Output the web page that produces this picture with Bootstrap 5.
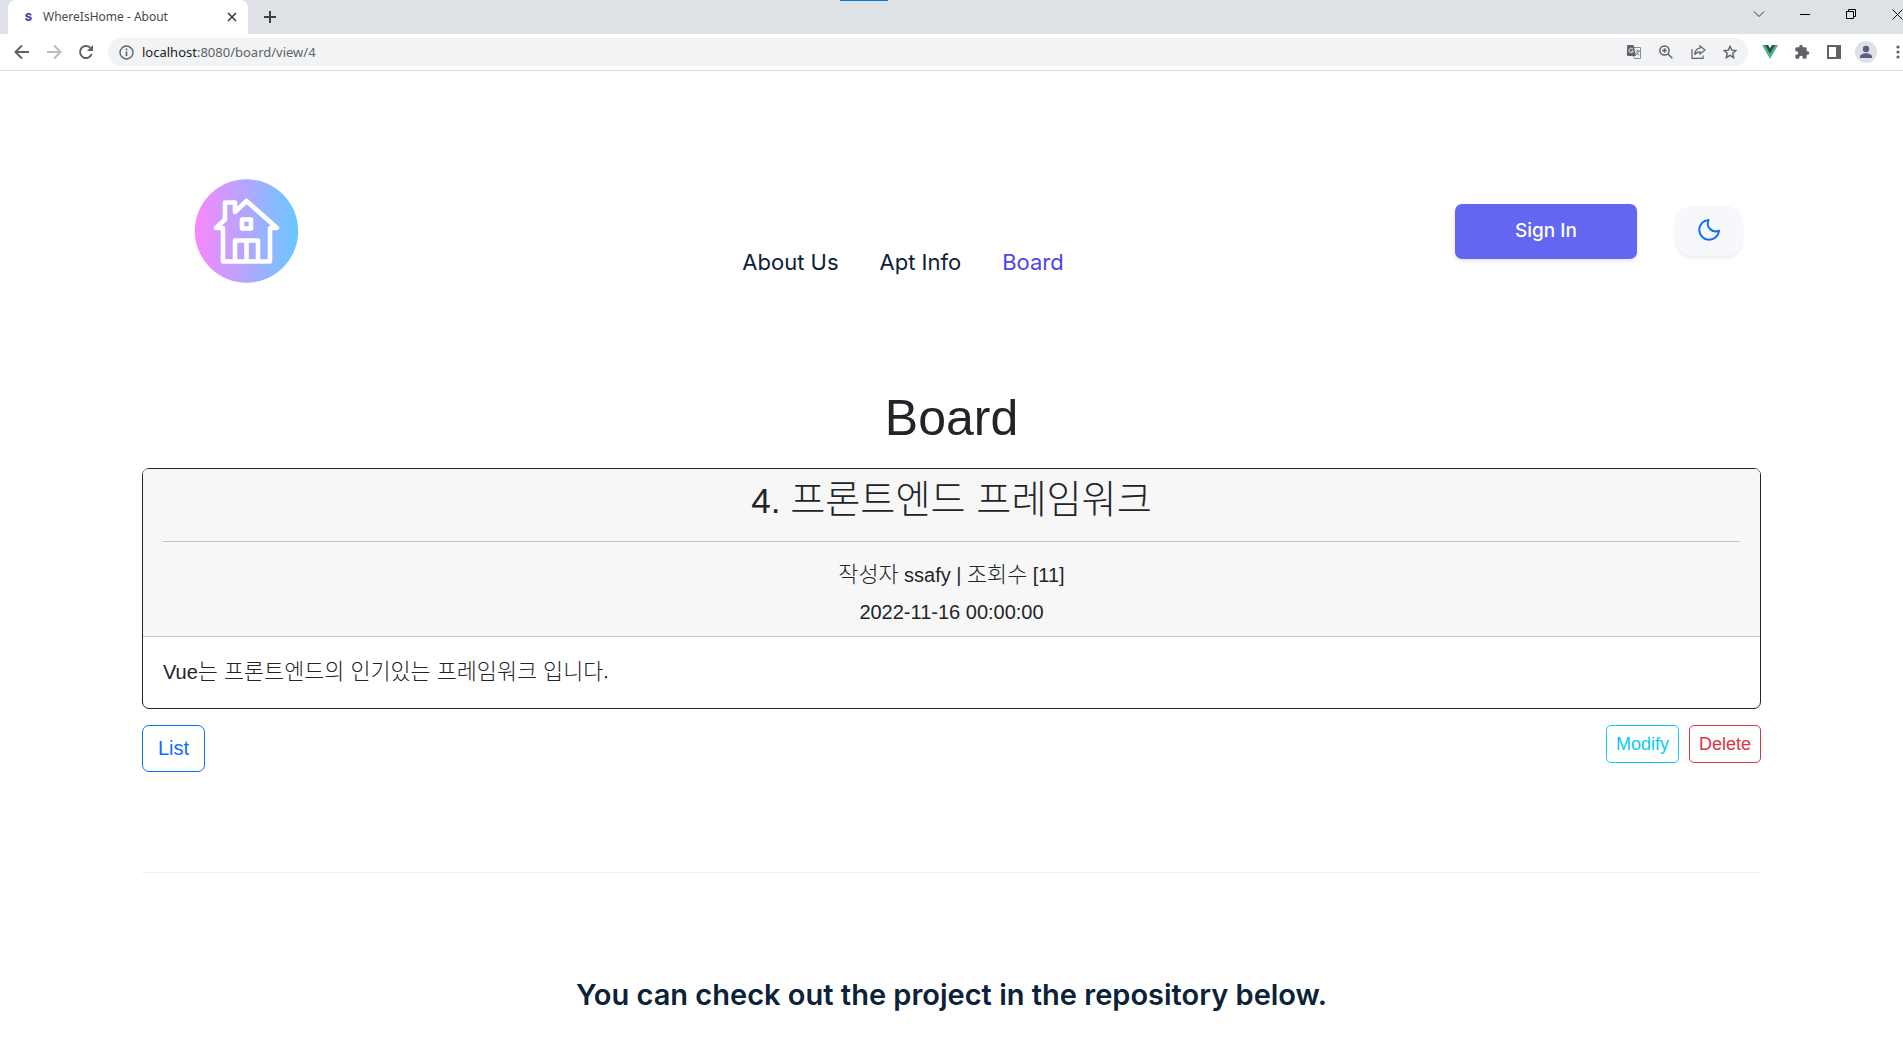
<!DOCTYPE html>
<html lang="ko">
<head>
<meta charset="utf-8">
<meta name="viewport" content="width=device-width, initial-scale=1">
<title>WhereIsHome - About</title>
<link href="https://cdn.jsdelivr.net/npm/bootstrap@5.3.0/dist/css/bootstrap.min.css" rel="stylesheet">
<style>
body{font-family:"Liberation Sans","Noto Sans CJK KR",sans-serif;font-size:20px;line-height:30px;color:#212529;overflow-x:hidden}
.ko{font-family:"Noto Sans CJK KR",sans-serif;font-weight:300;font-size:1.09em;line-height:1}
.chrome-ui{font-family:"Noto Sans","Noto Sans CJK KR",sans-serif;line-height:20px}
.chrome-ui button{border:0;background:none;padding:0;display:flex;align-items:center;justify-content:center;color:#5f6368;flex:none}
.tabstrip{height:34px;background:#dee1e6;position:relative}
.load-track{position:absolute;left:44.15%;top:0;width:240px;height:1px;background:#e5e5e5}
.load-track div{width:48px;height:1px;background:#0078d7}
.tab-item{width:240px;margin-left:8px;background:#fff;border-radius:8px 8px 0 0;padding:0 10px 0 14px;font-size:12px;color:#45494d}
.tab-icon{width:13px;font:800 11px/14px Inter,sans-serif;color:#3f3d9c;text-align:center}
.new-tab{height:34px}
.win-btn{width:46px;height:28px}
.win-btn:last-child{width:29px;justify-content:flex-end!important}
.toolbar{height:37px;border-bottom:1px solid #dadce0;padding-left:6px}
.tool-btn{width:32px;height:28px}
.tool-btn.tool-last{width:21px;justify-content:flex-end;padding-right:3px}
.omni{height:28px;border-radius:14px;background:#f1f3f4;padding-left:11px;padding-right:2px;margin-right:6px;margin-left:6px}
.url{font-size:13px;color:#5f6368}
.url b{font-weight:400;color:#202124}
.page{max-width:1619px;width:90%;margin:0 auto}
.site-nav{padding-top:108px}
.brand{padding:0 52px}
.menu{gap:41px;padding-top:62px;font:400 22px/32px Inter,sans-serif}
.menu a{color:#0b2239;text-decoration:none}
.menu a.active{color:#4f46e5}
.tools{gap:39px;margin-right:19px}
.sign{width:182px;height:55px;border:0;border-radius:7px;background:#6366f1;color:#fff;font:500 19px/28px Inter,sans-serif;box-shadow:0 2px 4px rgba(0,0,0,.1)}
.mode{width:66px;height:50px;border:0;border-radius:16px;background:#f7f8fc;color:#0d6efd;box-shadow:0 2px 4px rgba(0,0,0,.08);padding:0 0 2px;line-height:1}
h1{font-size:50px;line-height:60px;font-weight:400;margin:105px 0 20px}
.post{border:1px solid #212529;border-radius:7px}
.post .card-header{padding:9px 20px 5px;background:#f7f7f7;border-bottom:1px solid #c8c8c9}
.post h2{font-size:35px;line-height:41px;font-weight:400;margin:0}
.post hr{margin:20px 0 15px;opacity:1;border-color:#c3c4c5}
.post p{margin:0;line-height:37px}
.post .card-body{padding:20px;line-height:31px}
.btn-l{font-size:20px;line-height:29px;padding:8px 15px;border-radius:7px}
.btn-s{font-size:18px;line-height:26px;padding:5px 9px;border-radius:5px}
.acts{gap:10px}
.foot{margin-top:100px;border-top:1px solid #f0f0f1;padding-top:104px;color:#0b2239}
.foot h3{font:600 29px/36px Inter,sans-serif;margin:0}
</style>
</head>
<body>
<div class="chrome-ui">
  <div class="tabstrip d-flex align-items-start">
    <div class="load-track"><div></div></div>
    <div class="tab-item d-flex align-items-center align-self-stretch">
      <span class="tab-icon">S</span>
      <span class="ms-2 flex-grow-1">WhereIsHome - About</span>
      <button aria-label="Close tab"><svg width="12" height="12" viewBox="0 0 12 12" stroke="#3c4043" stroke-width="1.7"><path d="M2 2l8 8M10 2l-8 8"/></svg></button>
    </div>
    <button class="new-tab ms-3" aria-label="New tab"><svg width="12" height="12" viewBox="0 0 12 12" stroke="#3c4043" stroke-width="2"><path d="M6 0v12M0 6h12"/></svg></button>
    <div class="d-flex ms-auto">
      <button class="win-btn" aria-label="Search tabs"><svg width="12" height="12" viewBox="0 0 12 12" fill="none" stroke="#333"><path d="M1 3.500l5 5 5-5"/></svg></button>
      <button class="win-btn" aria-label="Minimize"><svg width="10" height="10" stroke="#000"><path d="M0 5.500h10"/></svg></button>
      <button class="win-btn" aria-label="Restore"><svg width="10" height="10" fill="none" stroke="#000"><path d="M.5 2.500h7v7h-7zM2.500 2.500v-2h7v7h-2"/></svg></button>
      <button class="win-btn" aria-label="Close"><svg width="11" height="11" stroke="#111"><path d="M.5.5l10 10M10.500.5l-10 10"/></svg></button>
    </div>
  </div>
  <div class="toolbar d-flex align-items-center">
    <button class="tool-btn" aria-label="Back"><svg width="16" height="16" viewBox="0 0 16 16" fill="none" stroke="#5f6368" stroke-width="2"><path d="M15 8H2.500M8 1.500L1.500 8 8 14.500"/></svg></button>
    <button class="tool-btn" aria-label="Forward"><svg width="16" height="16" viewBox="0 0 16 16" fill="none" stroke="#babcbe" stroke-width="2"><path d="M1 8h12.500M8 1.500L14.500 8 8 14.500"/></svg></button>
    <button class="tool-btn" aria-label="Reload"><svg width="16" height="16" viewBox="0 0 16 16"><path d="M13.700 10a6 6 0 1 1-1.400-6.200" fill="none" stroke="#5f6368" stroke-width="2"/><path d="M15 1v6H9z" fill="#5f6368"/></svg></button>
    <div class="omni d-flex align-items-center flex-grow-1">
      <svg width="15" height="15" viewBox="0 0 15 15" fill="none" stroke="#5f6368"><circle cx="7.500" cy="7.500" r="6.500" stroke-width="1.400"/><path d="M7.500 6.500V11M7.500 3.600v1.600" stroke-width="1.600"/></svg>
      <a class="url ms-2 me-auto text-decoration-none" href="#"><b>localhost</b>:8080/board/view/4</a>
      <button class="tool-btn" aria-label="Translate"><svg width="14" height="14" viewBox="0 0 14 14"><path d="M6 2.500h7.500v11h-6L6 10" fill="#f1f3f4" stroke="#8a8d91"/><path d="M1 0h5.500L9 11H1a1 1 0 0 1-1-1V1a1 1 0 0 1 1-1z" fill="#5f6368"/><path d="M6 4.300A2.200 2.200 0 1 0 6.300 6H4.300" fill="none" stroke="#f1f3f4"/><path d="M8.700 6H13M10.700 5v1M9.500 10l2.500-4M9.500 7.500l2.500 3" fill="none" stroke="#5f6368" stroke-width=".8"/></svg></button>
      <button class="tool-btn" aria-label="Zoom"><svg width="14" height="14" viewBox="0 0 14 14" fill="none" stroke="#5f6368" stroke-width="1.500"><circle cx="5.500" cy="5.500" r="4.600"/><path d="M9 9l4.300 4.300M5.500 3.200v4.600M3.200 5.500h4.600"/></svg></button>
      <button class="tool-btn" aria-label="Share"><svg width="15" height="14" viewBox="0 0 15 14" fill="none" stroke="#5f6368" stroke-width="1.200"><path d="M1 4v9.300h11V10.500M9 1l5 4-5 4V6.800C6.500 6.800 5 7.600 3.700 9.600 4 6 6 3.600 9 3.200z"/></svg></button>
      <button class="tool-btn" aria-label="Bookmark"><svg width="14" height="14" viewBox="0 0 14 14" fill="none" stroke="#5f6368" stroke-width="1.400"><path d="M7 1.300l1.700 3.900 4.200.4-3.200 2.800 1 4.200L7 10.400l-3.700 2.200 1-4.200L1.100 5.600l4.200-.4z"/></svg></button>
    </div>
    <button class="tool-btn" aria-label="Vue devtools"><svg width="16" height="14" viewBox="0 0 16 14"><path d="M0 0h16L8 14z" fill="#41b883"/><path d="M3 0h10L8 8.700z" fill="#35495e"/><path d="M6.100 0h3.800L8 3.300z" fill="#fff"/></svg></button>
    <button class="tool-btn" aria-label="Extensions"><svg width="16" height="16" viewBox="0 0 24 24" fill="#5f6368"><path d="M20.500 11H19V7a2 2 0 0 0-2-2h-4V3.500a2.500 2.500 0 0 0-5 0V5H4a2 2 0 0 0-2 2v3.800h1.500a2.700 2.700 0 0 1 0 5.400H2V20a2 2 0 0 0 2 2h3.800v-1.500a2.700 2.700 0 0 1 5.400 0V22H17a2 2 0 0 0 2-2v-4h1.500a2.500 2.500 0 0 0 0-5z"/></svg></button>
    <button class="tool-btn" aria-label="Side panel"><svg width="14" height="14"><path d="M1 1h12v12H1z" fill="#fff" stroke="#5f6368" stroke-width="2"/><path d="M9 1h4v12H9z" fill="#5f6368"/></svg></button>
    <button class="tool-btn" aria-label="Profile"><svg width="22" height="22"><circle cx="11" cy="11" r="11" fill="#dee1e6"/><circle cx="11" cy="8" r="3.200" fill="#57617a"/><path d="M5 17v-1.500c0-2 3.500-3.300 6-3.300s6 1.300 6 3.300V17z" fill="#57617a"/></svg></button>
    <button class="tool-btn tool-last" aria-label="Menu"><svg width="4" height="14" fill="#5f6368"><circle cx="2" cy="2" r="1.600"/><circle cx="2" cy="7" r="1.600"/><circle cx="2" cy="12" r="1.600"/></svg></button>
  </div>
</div>

<div class="page">
  <nav class="site-nav d-flex align-items-center justify-content-between">
    <a class="brand" href="#" aria-label="WhereIsHome"><svg class="d-block" width="105" height="104" viewBox="0 0 105 104">
      <defs><linearGradient id="g"><stop offset="0" stop-color="#fb86fd"/><stop offset="1" stop-color="#67c8ff"/></linearGradient></defs>
      <circle cx="52.500" cy="52" r="51.700" fill="url(#g)"/>
      <g fill="none" stroke="#fff" stroke-width="4.600" stroke-linejoin="round" stroke-linecap="round">
        <path d="M29 49v33.500h47V49M29 49h-7l9-8.500V23.500h10v9.500L52.500 22 83 49h-7"/>
        <path d="M41 81V61.500h23V81M52.500 62v19"/>
        <rect x="48" y="40.500" width="9" height="9"/>
      </g></svg></a>
    <div class="menu d-flex"><a href="#">About Us</a><a href="#">Apt Info</a><a class="active" href="#">Board</a></div>
    <div class="tools d-flex align-items-center">
      <button class="sign">Sign In</button>
      <button class="mode" aria-label="Dark mode"><svg width="24" height="24" viewBox="0 0 24 24" fill="none" stroke="currentColor" stroke-width="2" stroke-linejoin="round"><path d="M11.500 2A9.900 9.900 0 1 0 22 12.800C15 15.500 8.500 9 11.500 2z"/></svg></button>
    </div>
  </nav>

  <main>
    <h1 class="text-center">Board</h1>
    <div class="card post">
      <div class="card-header text-center">
        <h2>4. <span class="ko">프론트엔드 프레임워크</span></h2>
        <hr>
        <p><span class="ko">작성자</span> ssafy | <span class="ko">조회수</span> [11]</p>
        <p>2022-11-16 00:00:00</p>
      </div>
      <div class="card-body">Vue<span class="ko">는 프론트엔드의 인기있는 프레임워크 입니다.</span></div>
    </div>
    <div class="d-flex justify-content-between align-items-start pt-3">
      <button class="btn btn-outline-primary btn-l">List</button>
      <div class="acts d-flex">
        <button class="btn btn-outline-info btn-s">Modify</button>
        <button class="btn btn-outline-danger btn-s">Delete</button>
      </div>
    </div>
  </main>

  <footer class="foot text-center"><h3>You can check out the project in the repository below.</h3></footer>
</div>
<script src="https://cdn.jsdelivr.net/npm/bootstrap@5.3.0/dist/js/bootstrap.bundle.min.js"></script>
</body>
</html>
